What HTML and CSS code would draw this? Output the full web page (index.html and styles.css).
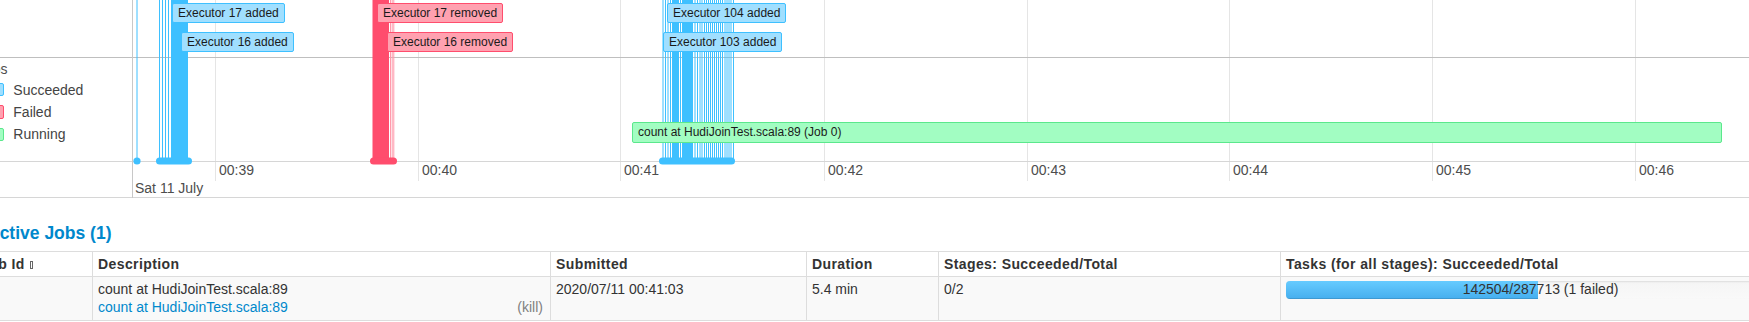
FILE: index.html
```html
<!DOCTYPE html>
<html>
<head>
<meta charset="utf-8">
<title>Spark Jobs</title>
<link rel="stylesheet" href="styles.css">
</head>
<body>
<div class="page">
  <div class="timeline">
    <div class="tl-left">
      <div class="grp grp-exec"></div>
      <div class="grp grp-jobs">
        <div class="grp-label">Jobs</div>
        <div class="legend">
          <div class="legend-row"><span class="sw sw-succeeded"></span><span class="legend-text">Succeeded</span></div>
          <div class="legend-row"><span class="sw sw-failed"></span><span class="legend-text">Failed</span></div>
          <div class="legend-row"><span class="sw sw-running"></span><span class="legend-text">Running</span></div>
        </div>
      </div>
      <div class="grp axis-left"></div>
    </div>
    <div class="tl-center">
      <svg class="tl-canvas" width="1616" height="198" viewBox="133 0 1616 198">
        <g class="grid-minor">
          <line x1="215.5" y1="0" x2="215.5" y2="181"/>
          <line x1="418.5" y1="0" x2="418.5" y2="181"/>
          <line x1="620.5" y1="0" x2="620.5" y2="181"/>
          <line x1="824.5" y1="0" x2="824.5" y2="181"/>
          <line x1="1027.5" y1="0" x2="1027.5" y2="181"/>
          <line x1="1229.5" y1="0" x2="1229.5" y2="181"/>
          <line x1="1432.5" y1="0" x2="1432.5" y2="181"/>
          <line x1="1635.5" y1="0" x2="1635.5" y2="181"/>
        </g>
        <line class="hsep" x1="133" y1="57.5" x2="1749" y2="57.5"/>
        <line class="axis-line" x1="133" y1="161.5" x2="1749" y2="161.5"/>
        <line class="axis-line" x1="133" y1="197.5" x2="1749" y2="197.5"/>

        <g class="ev-added">
          <line x1="137" y1="0" x2="137" y2="161"/>
          <line x1="159.5" y1="0" x2="159.5" y2="161"/>
          <line x1="162.5" y1="0" x2="162.5" y2="161"/>
          <line x1="165.5" y1="0" x2="165.5" y2="161"/>
          <line x1="168.5" y1="0" x2="168.5" y2="161"/>
          <rect x="171" y="0" width="17" height="161"/>
          <circle cx="137" cy="161" r="3.6"/>
          <rect x="156" y="157.5" width="36" height="7" rx="3.5"/>

          <line x1="663" y1="0" x2="663" y2="161"/>
          <line x1="665.5" y1="0" x2="665.5" y2="161"/>
          <line x1="668" y1="0" x2="668" y2="161"/>
          <line x1="670.5" y1="0" x2="670.5" y2="161"/>
          <rect x="672" y="0" width="7" height="161"/>
          <line x1="680.5" y1="0" x2="680.5" y2="161"/>
          <rect x="682" y="0" width="11" height="161"/>
          <line x1="695" y1="0" x2="695" y2="161"/>
          <line x1="697.5" y1="0" x2="697.5" y2="161"/>
          <line x1="700" y1="0" x2="700" y2="161"/>
          <line x1="702" y1="0" x2="702" y2="161"/>
          <line x1="704.5" y1="0" x2="704.5" y2="161"/>
          <line x1="706.5" y1="0" x2="706.5" y2="161"/>
          <line x1="708.5" y1="0" x2="708.5" y2="161"/>
          <line x1="710.5" y1="0" x2="710.5" y2="161"/>
          <line x1="712.5" y1="0" x2="712.5" y2="161"/>
          <line x1="714.5" y1="0" x2="714.5" y2="161"/>
          <line x1="716.5" y1="0" x2="716.5" y2="161"/>
          <line x1="718.5" y1="0" x2="718.5" y2="161"/>
          <line x1="720.5" y1="0" x2="720.5" y2="161"/>
          <line x1="722.5" y1="0" x2="722.5" y2="161"/>
          <line x1="725" y1="0" x2="725" y2="161"/>
          <line x1="727" y1="0" x2="727" y2="161"/>
          <line x1="729" y1="0" x2="729" y2="161"/>
          <line x1="731" y1="0" x2="731" y2="161"/>
          <line x1="733.5" y1="0" x2="733.5" y2="161"/>
          <rect x="659" y="157.5" width="76" height="7" rx="3.5"/>
        </g>

        <g class="ev-removed">
          <rect x="372.5" y="0" width="16.5" height="161"/>
          <line class="faint" x1="390.5" y1="0" x2="390.5" y2="161"/>
          <line class="faint" x1="392.2" y1="0" x2="392.2" y2="161"/>
          <line class="faint" x1="393.8" y1="0" x2="393.8" y2="161"/>
          <rect x="370" y="157.5" width="27" height="7" rx="3.5"/>
        </g>

        <g class="ticks">
          <text x="219" y="175">00:39</text>
          <text x="422" y="175">00:40</text>
          <text x="624" y="175">00:41</text>
          <text x="828" y="175">00:42</text>
          <text x="1031" y="175">00:43</text>
          <text x="1233" y="175">00:44</text>
          <text x="1436" y="175">00:45</text>
          <text x="1639" y="175">00:46</text>
          <text x="135" y="192.7">Sat 11 July</text>
        </g>
      </svg>

      <div class="item item-added row-1" style="left:39px">Executor 17 added</div>
      <div class="item item-added row-2" style="left:48px">Executor 16 added</div>
      <div class="item item-removed row-1" style="left:244px">Executor 17 removed</div>
      <div class="item item-removed row-2" style="left:254px">Executor 16 removed</div>
      <div class="item item-added row-1" style="left:534px">Executor 104 added</div>
      <div class="item item-added row-2" style="left:530px">Executor 103 added</div>
      <div class="item item-running row-job" style="left:499px;width:1090px">count at HudiJoinTest.scala:89 (Job 0)</div>
    </div>
  </div>

  <div class="jobs-section">
    <h4 class="section-title"><a class="section-link">Active Jobs (1)</a></h4>
    <table class="jobs">
      <colgroup>
        <col class="c-id">
        <col class="c-desc">
        <col class="c-sub">
        <col class="c-dur">
        <col class="c-stages">
        <col class="c-tasks">
      </colgroup>
      <thead>
        <tr>
          <th>Job Id&nbsp;<span class="sort-icon"></span></th>
          <th>Description</th>
          <th>Submitted</th>
          <th>Duration</th>
          <th>Stages: Succeeded/Total</th>
          <th>Tasks (for all stages): Succeeded/Total</th>
        </tr>
      </thead>
      <tbody>
        <tr>
          <td></td>
          <td>
            <div class="desc-line">count at HudiJoinTest.scala:89</div>
            <div class="desc-line"><a class="kill-link">(kill)</a><a class="name-link">count at HudiJoinTest.scala:89</a></div>
          </td>
          <td>2020/07/11 00:41:03</td>
          <td>5.4 min</td>
          <td>0/2</td>
          <td>
            <div class="progress">
              <div class="bar" style="width:49.53%"></div>
              <span class="progress-text">142504/287713 (1 failed)</span>
            </div>
          </td>
        </tr>
      </tbody>
    </table>
  </div>
</div>
</body>
</html>
```
FILE: styles.css
```css
html, body {
  margin: 0;
  padding: 0;
  overflow: hidden;
  background: #fff;
}
body {
  width: 1749px;
  height: 322px;
  font-family: "Liberation Sans", Arial, Helvetica, sans-serif;
  font-size: 14px;
  color: #333;
}
.page {
  margin-left: -21px;
  width: 1900px;
}

/* ---------- timeline ---------- */
.timeline {
  display: flex;
  margin-left: -6px;
  height: 198px;
}
.tl-left {
  flex: none;
  width: 159px;
  border-right: 1px solid #c8c8c8;
  display: flex;
  flex-direction: column;
}
.grp {
  flex: none;
  box-sizing: border-box;
}
.grp-exec {
  height: 58px;
  border-bottom: 1px solid #bfbfbf;
}
.grp-jobs {
  height: 104px;
  border-bottom: 1px solid #d6d6d6;
  padding: 3px 0 0 5px;
}
.axis-left {
  height: 36px;
  border-bottom: 1px solid #d6d6d6;
}
.grp-label {
  line-height: 16px;
  color: #4d4d4d;
}
.legend {
  margin-top: 1.5px;
  padding-left: 8.3px;
}
.legend-row {
  display: flex;
  align-items: center;
  height: 22.35px;
}
.sw {
  width: 18px;
  height: 13.5px;
  box-sizing: border-box;
  border: 1px solid;
  border-radius: 2px;
  margin-right: 9px;
}
.sw-succeeded { background: #a0dfff; border-color: #3ec0ff; }
.sw-failed { background: #ffa1b0; border-color: #ff4d6d; }
.sw-running { background: #a2fdc2; border-color: #5be88c; }
.legend-text {
  color: #444;
  line-height: 16px;
}

.tl-center {
  position: relative;
  flex: none;
  width: 1616px;
  height: 198px;
}
.tl-canvas {
  position: absolute;
  left: 0;
  top: 0;
  display: block;
}
.grid-minor line {
  stroke: #e5e5e5;
  stroke-width: 1;
}
.hsep {
  stroke: #bfbfbf;
  stroke-width: 1;
}
.axis-line {
  stroke: #d6d6d6;
  stroke-width: 1;
}
.ev-added line {
  stroke: #3ec0ff;
  stroke-width: 1;
}
.ev-added rect,
.ev-added circle {
  fill: #3ec0ff;
}
.ev-removed rect {
  fill: #ff4d6d;
}
.ev-removed line {
  stroke: #ff4d6d;
  stroke-width: 1;
}
.ev-removed line.faint {
  stroke: #ff9aab;
}
.ticks text {
  font-family: "Liberation Sans", Arial, sans-serif;
  font-size: 14px;
  fill: #4d4d4d;
}

.item {
  position: absolute;
  height: 20px;
  box-sizing: border-box;
  border: 1px solid;
  border-radius: 2px;
  padding: 0 5px;
  font-size: 12px;
  line-height: 18px;
  color: #1a1a1a;
  white-space: nowrap;
}
.item-added { background: #a0dfff; border-color: #3ec0ff; }
.item-removed { background: #ffa1b0; border-color: #ff4d6d; }
.item-running { background: #a2fdc2; border-color: #5be88c; }
.row-1 { top: 3px; }
.row-2 { top: 32px; }
.row-job {
  top: 122px;
  height: 21px;
  line-height: 19px;
}

/* ---------- jobs table ---------- */
.section-title {
  margin: 25px 0 8px;
  padding-left: 8px;
  font-size: 17.5px;
  line-height: 20px;
  font-weight: bold;
}
.section-link {
  color: #0088cc;
}
.jobs {
  border-collapse: collapse;
  table-layout: fixed;
  width: 1825px;
  margin-left: -4px;
}
.c-id { width: 117px; }
.c-desc { width: 458px; }
.c-sub { width: 256px; }
.c-dur { width: 132px; }
.c-stages { width: 342px; }
.c-tasks { width: 520px; }
.jobs th,
.jobs td {
  border: 1px solid #ddd;
  padding: 4px 5px;
  text-align: left;
  vertical-align: top;
}
.jobs th {
  line-height: 16px;
  font-weight: bold;
  letter-spacing: 0.4px;
  background: #fff;
  color: #333;
  white-space: nowrap;
}
.jobs td {
  line-height: 17.5px;
  background: #f9f9f9;
}
.sort-icon {
  display: inline-block;
  width: 1.5px;
  height: 6px;
  border: 1px solid #666;
  margin-left: 1px;
  vertical-align: baseline;
}
.kill-link {
  float: right;
  margin-right: 2px;
  color: #808080;
}
.name-link {
  color: #0088cc;
}
.progress {
  position: relative;
  height: 17.5px;
  border-radius: 4px;
  overflow: hidden;
  background: linear-gradient(#f5f5f5, #f9f9f9);
  box-shadow: inset 0 1px 2px rgba(0, 0, 0, 0.1);
}
.bar {
  height: 100%;
  background: linear-gradient(#66cbff, #45aeee);
  box-shadow: inset 0 -1px 0 rgba(0, 0, 0, 0.12);
}
.progress-text {
  position: absolute;
  left: 0;
  top: 0;
  width: 100%;
  text-align: center;
  line-height: 17.5px;
  color: #333;
}
```
